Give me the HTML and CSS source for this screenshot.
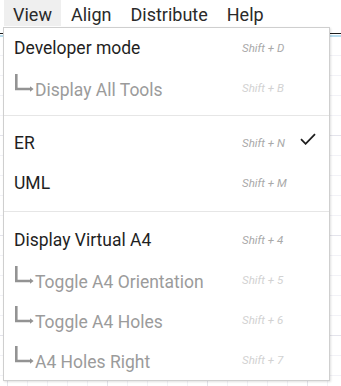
FILE: index.html
```html
<!DOCTYPE html>
<html lang="en">
<head>
    <meta charset="UTF-8">
    <meta name="viewport" content="width=device-width, initial-scale=1.0">
    <title>Diagram editor - View menu</title>
    <link rel="stylesheet" href="styles.css">
</head>
<body>
    <div class="menubar">
        <span class="menu-title open">View</span>
        <span class="menu-title">Align</span>
        <span class="menu-title">Distribute</span>
        <span class="menu-title">Help</span>
    </div>
    <div class="canvas"></div>

    <!-- View dropdown -->
    <div class="dropdown">
        <div class="item">
            <span class="label">Developer mode</span>
            <span class="shortcut">Shift + D</span>
        </div>
        <div class="item sub disabled">
            <span class="label"><svg class="sub-icon" viewBox="0 0 20 18" width="20" height="18"><path d="M2.3 0v15h14" fill="none" stroke="currentColor" stroke-width="2.6"/><path d="M16 12.2l3.6 2.8-3.6 2.8z" fill="currentColor"/></svg>Display All Tools</span>
            <span class="shortcut">Shift + B</span>
        </div>
        <div class="separator"></div>
        <div class="item">
            <span class="label">ER</span>
            <span class="shortcut">Shift + N</span>
            <svg class="check" viewBox="0 0 16 12" width="16" height="12"><path d="M1 6.2l4.6 4.6L15 1.2" fill="none" stroke="currentColor" stroke-width="1.8"/></svg>
        </div>
        <div class="item">
            <span class="label">UML</span>
            <span class="shortcut">Shift + M</span>
        </div>
        <div class="separator second"></div>
        <div class="item">
            <span class="label">Display Virtual A4</span>
            <span class="shortcut">Shift + 4</span>
        </div>
        <div class="item sub disabled">
            <span class="label"><svg class="sub-icon" viewBox="0 0 20 18" width="20" height="18"><path d="M2.3 0v15h14" fill="none" stroke="currentColor" stroke-width="2.6"/><path d="M16 12.2l3.6 2.8-3.6 2.8z" fill="currentColor"/></svg>Toggle A4 Orientation</span>
            <span class="shortcut">Shift + 5</span>
        </div>
        <div class="item sub disabled">
            <span class="label"><svg class="sub-icon" viewBox="0 0 20 18" width="20" height="18"><path d="M2.3 0v15h14" fill="none" stroke="currentColor" stroke-width="2.6"/><path d="M16 12.2l3.6 2.8-3.6 2.8z" fill="currentColor"/></svg>Toggle A4 Holes</span>
            <span class="shortcut">Shift + 6</span>
        </div>
        <div class="item sub disabled">
            <span class="label"><svg class="sub-icon" viewBox="0 0 20 18" width="20" height="18"><path d="M2.3 0v15h14" fill="none" stroke="currentColor" stroke-width="2.6"/><path d="M16 12.2l3.6 2.8-3.6 2.8z" fill="currentColor"/></svg>A4 Holes Right</span>
            <span class="shortcut">Shift + 7</span>
        </div>
    </div>
</body>
</html>
```

FILE: styles.css
```css
html, body {
    height: 100%;
}
body {
    margin: 0;
    font-family: Roboto, "Noto Sans", sans-serif;
    color: #222;
    background: #fff;
    display: flex;
    flex-direction: column;
    overflow: hidden;
}
.menubar {
    display: flex;
    gap: 1px;
    height: 33px;
    padding-left: 4px;
    flex-shrink: 0;
}
.menu-title {
    height: 26px;
    box-sizing: border-box;
    padding: 3px 9px 0;
    font-size: 18px;
    line-height: 23px;
    color: #2a2a2a;
}
.menu-title.open {
    background: #efefef;
}
/* drawing area with the grid */
.canvas {
    flex: 1;
    border-top: 1px solid #1c1c1c;
    box-shadow: inset 0 1px 0 #fff, inset 0 3px 0 #b9def0;
    background-color: #fff;
    background-image:
        linear-gradient(to right, #e4e4ec 1px, transparent 1px),
        linear-gradient(to bottom, #e4e4ec 1px, transparent 1px),
        linear-gradient(to right, #f2f2f7 1px, transparent 1px),
        linear-gradient(to bottom, #f2f2f7 1px, transparent 1px);
    background-size: 100px 100px, 100px 100px, 20px 20px, 20px 20px;
    background-position: 7px 1px, 7px 1px, 7px 1px, 7px 1px;
}
.dropdown {
    position: absolute;
    left: 3px;
    top: 27px;
    width: 327px;
    box-sizing: border-box;
    background: #fff;
    border: 1px solid #cfcfcf;
    box-shadow: 1px 1px 2px rgba(0, 0, 0, 0.12);
}
.item {
    display: grid;
    grid-template-columns: 228px 56px 18px;
    align-items: center;
    height: 40px;
    padding-left: 10px;
    font-size: 17.5px;
    color: #1f1f1f;
}
.label {
    display: flex;
    align-items: center;
    white-space: nowrap;
}
.item.sub .label {
    padding-top: 4px;
}
.sub-icon {
    margin-bottom: 14px;
    margin-right: 1px;
    color: #939393;
}
.shortcut {
    font-size: 11.5px;
    font-style: italic;
    color: #a9a9a9;
    white-space: nowrap;
}
.disabled .label {
    color: #9b9b9b;
}
.disabled .shortcut {
    color: #d2d2d2;
}
.check {
    color: #1e1e1e;
    margin-left: 2px;
    margin-top: -8px;
}
.separator {
    height: 1px;
    background: #e6e6e6;
    margin: 7px 0;
}
.separator.second {
    margin: 8px 0;
}
```
